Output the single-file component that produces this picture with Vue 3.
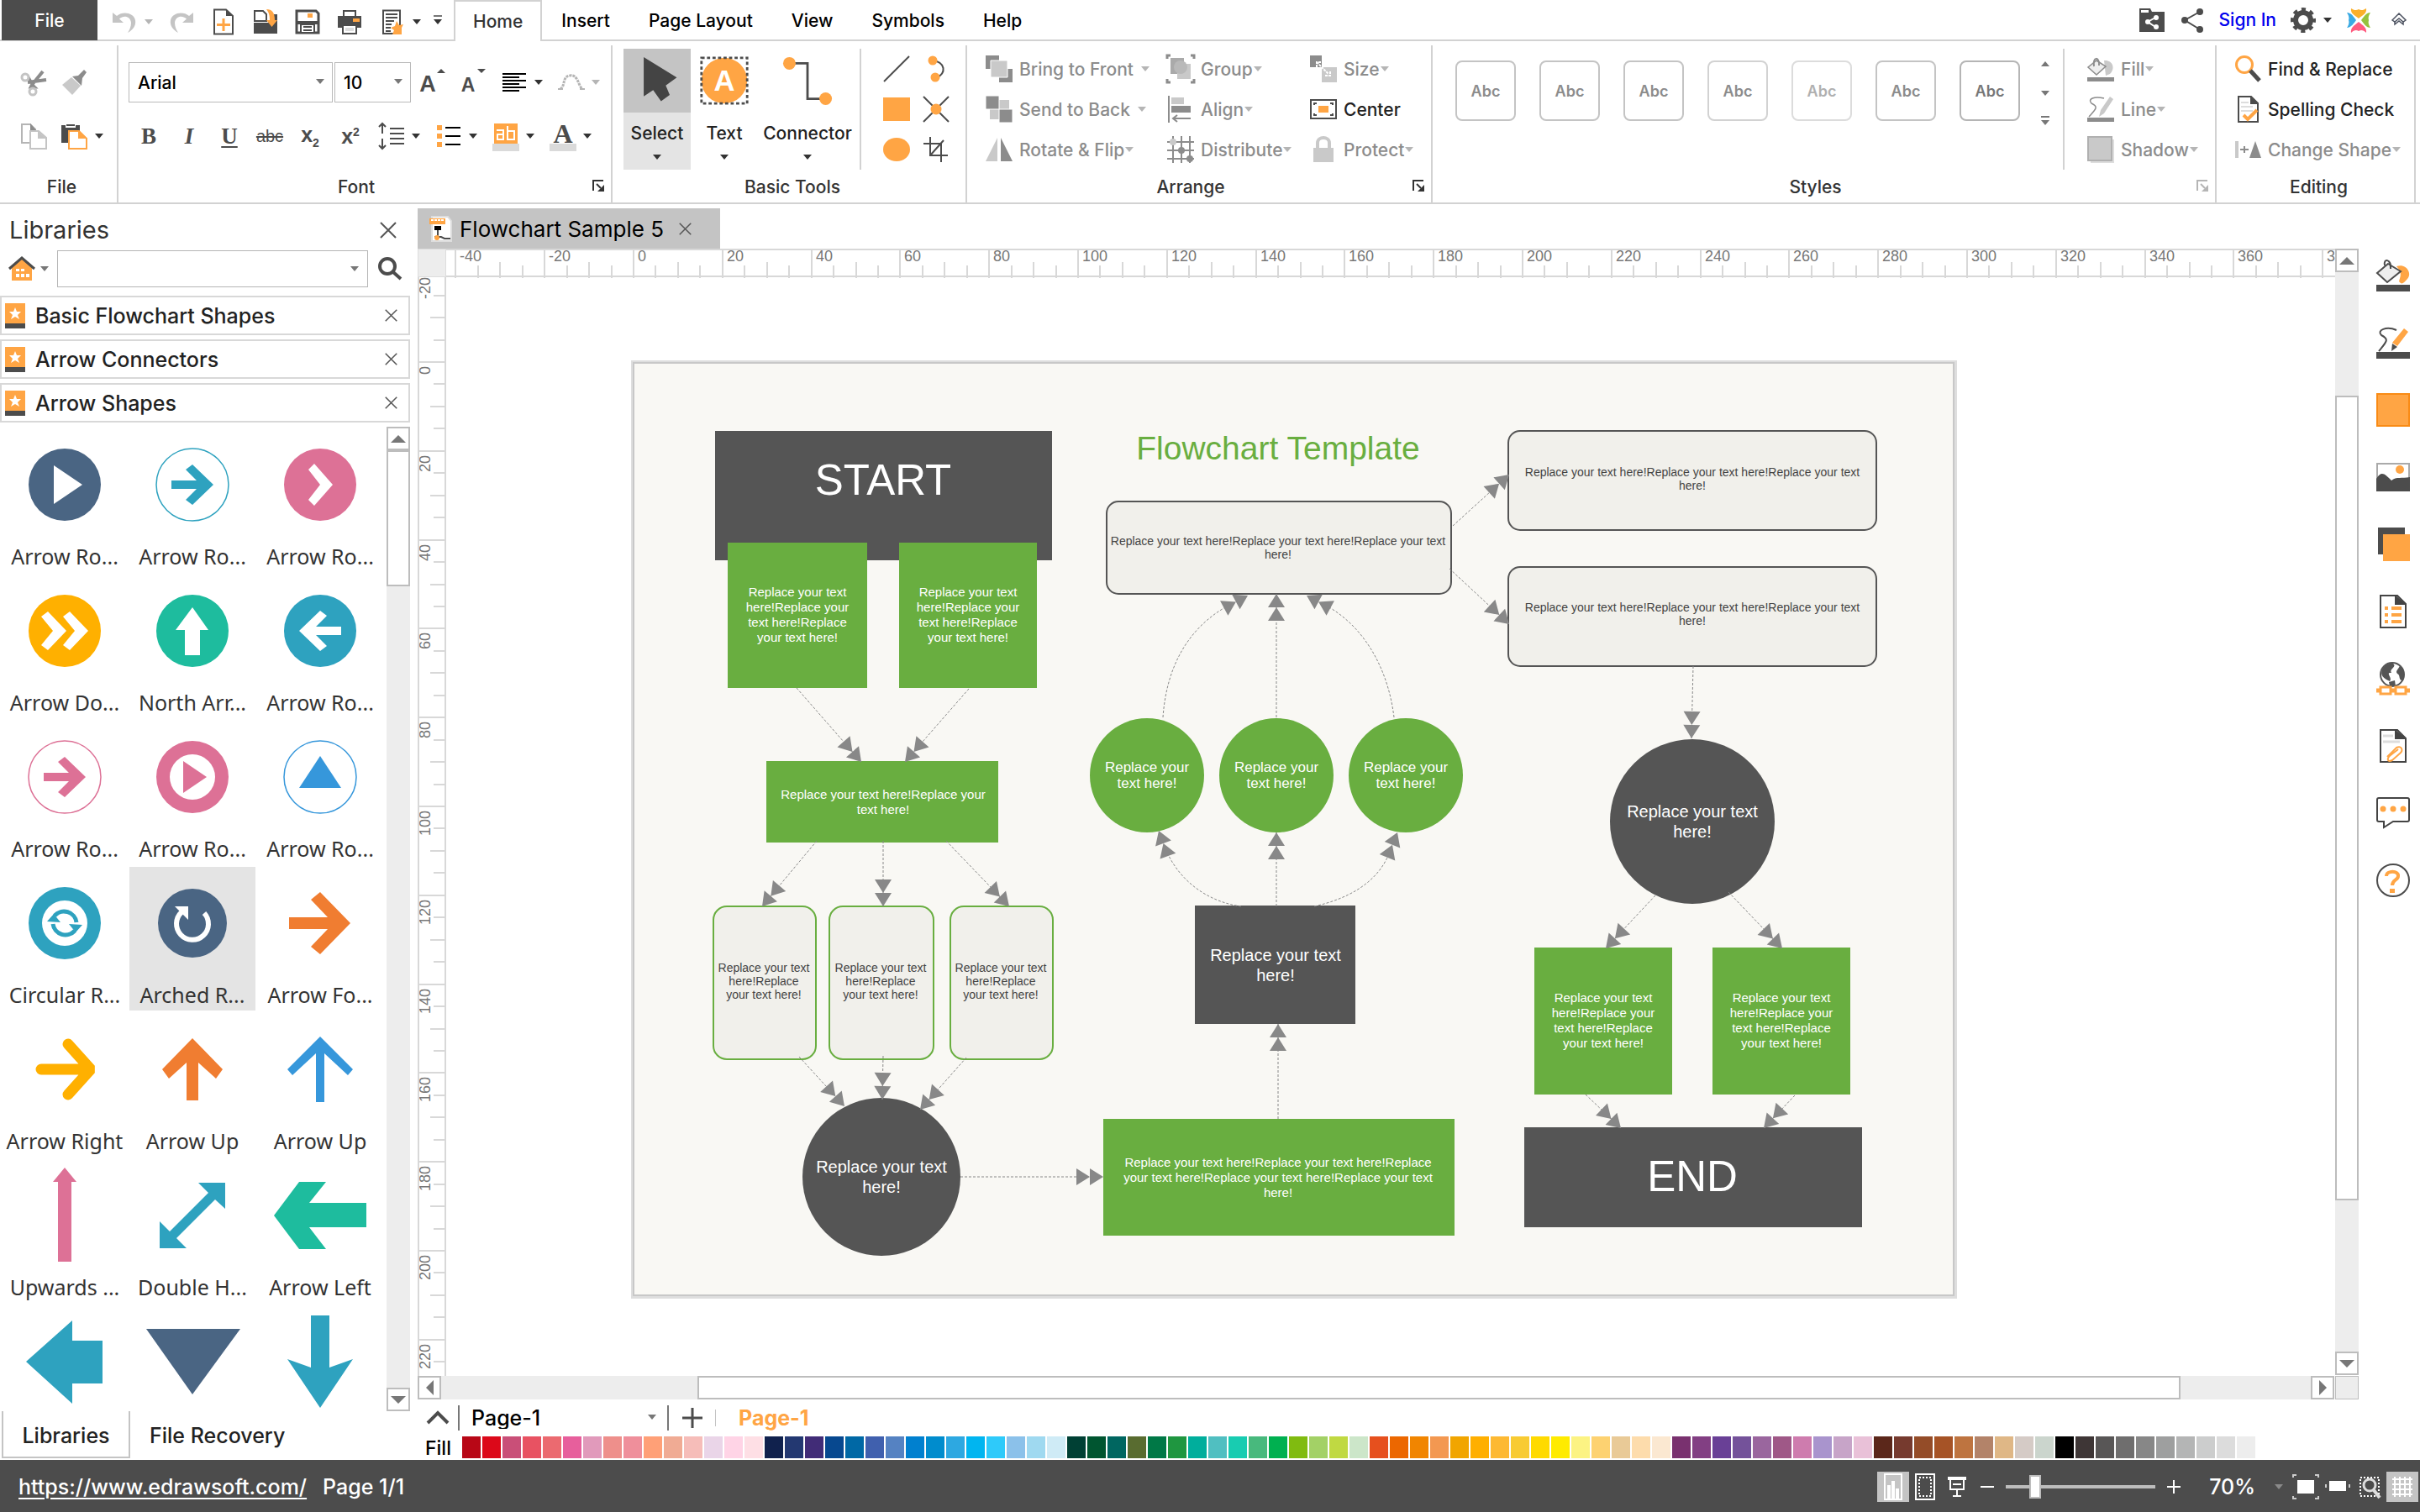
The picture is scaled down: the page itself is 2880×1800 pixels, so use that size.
<template>
  <div class="app">
    <!-- 顶部：快捷工具栏与菜单 -->
    <header class="topbar">
      <button class="file-btn">File</button>
      <div class="quick">
        <button class="q-undo" aria-label="Undo"><svg viewBox="0 0 32 32" v-html="icons.undo"></svg></button>
        <button class="q-arrow" aria-label="Undo history"><i class="tri light"></i></button>
        <button v-for="q in quick" :key="q" class="q-btn" :aria-label="q"><svg viewBox="0 0 32 32" v-html="icons[q]"></svg></button>
        <button class="q-small" aria-label="Template list"><i class="tri"></i></button>
        <button class="q-more" aria-label="Customize"><i class="tri bar"></i></button>
      </div>
      <nav class="tabs">
        <button v-for="t in tabs" :key="t" class="tab" :class="{ active: t === activeTab }" @click="activeTab = t">{{ t }}</button>
      </nav>
      <div class="account">
        <button aria-label="Share folder"><svg viewBox="0 0 32 32" v-html="icons.shareFolder"></svg></button>
        <button aria-label="Share"><svg viewBox="0 0 32 32" v-html="icons.share"></svg></button>
        <a href="#">Sign In</a>
        <button class="gear" aria-label="Options"><svg viewBox="0 0 32 32" v-html="icons.gear"></svg><i class="tri"></i></button>
        <button aria-label="Edraw"><svg viewBox="0 0 32 32" v-html="icons.logo"></svg></button>
        <button aria-label="Collapse ribbon"><svg viewBox="0 0 32 32" v-html="icons.collapse"></svg></button>
      </div>
    </header>

    <!-- 功能区 -->
    <section class="ribbon">
      <div class="group g-file">
        <div class="two-rows">
          <div class="row">
            <button aria-label="Cut"><svg viewBox="0 0 32 32" v-html="icons.cut"></svg></button>
            <button aria-label="Format painter"><svg viewBox="0 0 32 32" v-html="icons.brush"></svg></button>
          </div>
          <div class="row">
            <button aria-label="Copy"><svg viewBox="0 0 32 32" v-html="icons.copy"></svg></button>
            <button aria-label="Paste"><svg viewBox="0 0 32 32" v-html="icons.paste"></svg><i class="tri"></i></button>
          </div>
        </div>
        <div class="caption"><span>File</span></div>
      </div>

      <div class="group g-font">
        <div class="two-rows">
          <div class="row">
            <label class="combo family"><select aria-label="Font family"><option>Arial</option></select></label>
            <label class="combo size"><select aria-label="Font size"><option>10</option></select></label>
            <button class="fb" aria-label="Grow font"><svg viewBox="0 0 32 32" v-html="icons.grow"></svg></button>
            <button class="fb" aria-label="Shrink font"><svg viewBox="0 0 32 32" v-html="icons.shrink"></svg></button>
            <button class="fd" aria-label="Align text"><svg viewBox="0 0 32 32" v-html="icons.alignText"></svg><i class="tri"></i></button>
            <button class="fd" aria-label="Curve text"><svg viewBox="0 0 32 32" v-html="icons.curve"></svg><i class="tri light"></i></button>
          </div>
          <div class="row">
            <button class="fb serif" aria-label="Bold"><b>B</b></button>
            <button class="fb serif" aria-label="Italic"><em>I</em></button>
            <button class="fb serif" aria-label="Underline"><u>U</u></button>
            <button class="fb strike" aria-label="Strikethrough"><s>abc</s></button>
            <button class="fb script" aria-label="Subscript"><b>x<sub>2</sub></b></button>
            <button class="fb script" aria-label="Superscript"><b>x<sup>2</sup></b></button>
            <button v-for="f in fontDrops" :key="f" class="fd" :aria-label="f"><svg viewBox="0 0 32 32" v-html="icons[f]"></svg><i class="tri"></i></button>
          </div>
        </div>
        <div class="caption"><span>Font</span><button class="launch" aria-label="Font options"><svg viewBox="0 0 16 16" v-html="icons.launch"></svg></button></div>
      </div>

      <div class="group g-basic">
        <div class="row body">
          <button class="big on">
            <span class="big-icon"><svg viewBox="0 0 64 64" v-html="icons.select"></svg></span>
            <span>Select</span><i class="tri"></i>
          </button>
          <button class="big">
            <span class="big-icon"><svg viewBox="0 0 64 64" v-html="icons.text"></svg></span>
            <span>Text</span><i class="tri"></i>
          </button>
          <button class="big wide">
            <span class="big-icon"><svg viewBox="0 0 64 64" v-html="icons.connector"></svg></span>
            <span>Connector</span><i class="tri"></i>
          </button>
          <div class="draw">
            <button v-for="d in drawTools" :key="d" :aria-label="d"><svg viewBox="0 0 32 32" v-html="icons[d]"></svg></button>
          </div>
        </div>
        <div class="caption"><span>Basic Tools</span></div>
      </div>

      <div class="group g-arrange">
        <div class="body arrange">
          <button v-for="c in arrange" :key="c.name" class="cmd" :class="{ off: !c.on }">
            <svg viewBox="0 0 32 32" v-html="icons[c.icon]"></svg><span>{{ c.name }}</span><i v-if="!c.on" class="tri light" :class="{ far: c.far }"></i>
          </button>
        </div>
        <div class="caption"><span>Arrange</span><button class="launch" aria-label="Arrange options"><svg viewBox="0 0 16 16" v-html="icons.launch"></svg></button></div>
      </div>

      <div class="group g-styles">
        <div class="row body">
          <div class="gallery">
            <button v-for="n in 7" :key="n" :class="'abc abc' + n">Abc</button>
          </div>
          <div class="spin">
            <button aria-label="Previous styles"><i class="tri up"></i></button>
            <button aria-label="Next styles"><i class="tri"></i></button>
            <button aria-label="All styles"><i class="tri bar"></i></button>
          </div>
          <div class="stack styles-cmds">
            <button class="cmd off"><svg viewBox="0 0 32 32" v-html="icons.fill"></svg><span>Fill</span><i class="tri light"></i></button>
            <button class="cmd off"><svg viewBox="0 0 32 32" v-html="icons.line"></svg><span>Line</span><i class="tri light"></i></button>
            <button class="cmd off"><svg viewBox="0 0 32 32" v-html="icons.shadow"></svg><span>Shadow</span><i class="tri light"></i></button>
          </div>
        </div>
        <div class="caption"><span>Styles</span><button class="launch faint" aria-label="Style options"><svg viewBox="0 0 16 16" v-html="icons.launch"></svg></button></div>
      </div>

      <div class="group g-edit">
        <div class="stack body">
          <button class="cmd"><svg viewBox="0 0 32 32" v-html="icons.find"></svg><span>Find &amp; Replace</span></button>
          <button class="cmd"><svg viewBox="0 0 32 32" v-html="icons.spell"></svg><span>Spelling Check</span></button>
          <button class="cmd off"><svg viewBox="0 0 32 32" v-html="icons.change"></svg><span>Change Shape</span><i class="tri light"></i></button>
        </div>
        <div class="caption"><span>Editing</span></div>
      </div>
    </section>

    <main class="main">
      <!-- 左侧图库 -->
      <aside class="side">
        <div class="side-title">
          <h2>Libraries</h2>
          <button aria-label="Close panel"><svg viewBox="0 0 20 20" v-html="icons.close"></svg></button>
        </div>
        <div class="side-search">
          <button class="home" aria-label="Library menu"><svg viewBox="0 0 32 32" v-html="icons.home"></svg><i class="tri mid"></i></button>
          <label class="search-box"><input type="text" aria-label="Search libraries" /><i class="tri mid"></i></label>
          <button class="search" aria-label="Search"><svg viewBox="0 0 32 32" v-html="icons.search"></svg></button>
        </div>
        <div class="lib-rows">
          <div v-for="l in libs" :key="l" class="lib-row">
            <svg viewBox="0 0 24 30" v-html="icons.lib"></svg>
            <span>{{ l }}</span>
            <button :aria-label="'Close ' + l"><svg viewBox="0 0 20 20" v-html="icons.close"></svg></button>
          </div>
        </div>
        <div class="shapes">
          <div class="shape-grid">
            <button v-for="(s, i) in shapes" :key="i" class="shape" :class="{ picked: i === picked }" @click="picked = i">
              <svg viewBox="-60 -60 120 120" v-html="s.art"></svg>
              <span v-if="s.name">{{ s.name }}</span>
            </button>
          </div>
          <div class="vbar side-bar">
            <button aria-label="Scroll up"><i class="tri up mid big-tri"></i></button>
            <div class="vtrack"><span class="thumb"></span></div>
            <button aria-label="Scroll down"><i class="tri mid big-tri"></i></button>
          </div>
        </div>
        <div class="side-tabs">
          <button class="on">Libraries</button>
          <button>File Recovery</button>
        </div>
      </aside>

      <!-- 绘图区 -->
      <section class="doc">
        <div class="doc-tabs">
          <div class="doc-tab">
            <svg viewBox="0 0 32 32" v-html="icons.doc"></svg>
            <span>Flowchart Sample 5</span>
            <button aria-label="Close document"><svg viewBox="0 0 20 20" v-html="icons.close"></svg></button>
          </div>
        </div>
        <div class="board">
          <div class="corner"></div>
          <svg class="ruler-x">
            <g v-for="t in ticksX" :key="t.v">
              <line :x1="t.pos" :x2="t.pos" :y1="t.start" y2="35" />
              <text v-if="t.label !== null" :x="t.pos + 5" y="15">{{ t.label }}</text>
            </g>
            <path d="M0 1H2400M0 33H2400" />
          </svg>
          <div class="vbar">
            <button aria-label="Scroll up"><i class="tri up mid big-tri"></i></button>
            <div class="vtrack"><span class="thumb"></span></div>
            <button aria-label="Scroll down"><i class="tri mid big-tri"></i></button>
          </div>
          <svg class="ruler-y">
            <g v-for="t in ticksY" :key="t.v">
              <line :y1="t.pos" :y2="t.pos" :x1="t.start" x2="34" />
              <text v-if="t.label !== null" :transform="`translate(15 ${t.pos + 5}) rotate(-90)`" text-anchor="end">{{ t.label }}</text>
            </g>
            <path d="M1 0V1400M33 0V1400" />
          </svg>
          <div class="canvas">
            <svg class="page" viewBox="750 428 1580 1120" width="1580" height="1120">
              <rect x="751" y="429" width="1578" height="1117" fill="#dedede" />
              <rect x="754" y="432" width="1571" height="1110" fill="#f9f8f4" stroke="#c8c8c8" stroke-width="2" />
              <g v-for="(n, i) in nodes" :key="'n' + i">
                <circle v-if="n.r" :cx="n.x" :cy="n.y" :r="n.r" :class="n.kind" />
                <rect v-else :x="n.x" :y="n.y" :width="n.w" :height="n.h" :rx="n.round || 0" :class="n.kind" />
              </g>
              <text class="heading" x="1521" y="533">Flowchart Template</text>
              <g v-for="(n, i) in nodes" :key="'t' + i" class="label" :class="[n.kind, n.type]">
                <text v-for="(s, k) in n.text" :key="k" :x="n.tx" :y="n.ty + k * n.lh">{{ s }}</text>
              </g>
              <g v-for="(c, i) in links" :key="'c' + i">
                <path class="link" :d="c.d" />
                <path class="head" d="M0 0L-16 -10V10ZM-16 0L-32 -10V10Z" :transform="`translate(${c.x} ${c.y}) rotate(${c.a})`" />
              </g>
            </svg>
          </div>
          <div class="hbar">
            <button aria-label="Scroll left"><i class="tri left"></i></button>
            <div class="htrack"><span class="thumb"></span></div>
            <button aria-label="Scroll right"><i class="tri right"></i></button>
          </div>
          <div class="corner end"></div>
        </div>
        <div class="pages">
          <button class="caret" aria-label="Show pages"><svg viewBox="0 0 32 32" v-html="icons.caret"></svg></button>
          <label class="page-pick"><select aria-label="Page"><option>Page-1</option></select></label>
          <button class="plus" aria-label="Add page"><svg viewBox="0 0 32 32" v-html="icons.plus"></svg></button>
          <button class="page-tab">Page-1</button>
        </div>
        <div class="fills">
          <span class="fills-label">Fill</span>
          <button v-for="(c, i) in palette" :key="i" class="swatch" :style="{ background: '#' + c }" :aria-label="'#' + c"></button>
        </div>
      </section>

      <!-- 右侧工具条 -->
      <aside class="rail">
        <button v-for="r in rail" :key="r" :aria-label="r"><svg viewBox="0 0 40 40" v-html="icons[r]"></svg></button>
      </aside>
    </main>

    <footer class="status">
      <a href="https://www.edrawsoft.com/">https://www.edrawsoft.com/</a>
      <span class="count">Page 1/1</span>
      <div class="zoom">
        <button class="view on" aria-label="Normal view"><svg viewBox="0 0 32 32" v-html="icons.vNormal"></svg></button>
        <button class="view" aria-label="Page view"><svg viewBox="0 0 32 32" v-html="icons.vPage"></svg></button>
        <button class="view" aria-label="Presentation"><svg viewBox="0 0 32 32" v-html="icons.vShow"></svg></button>
        <button class="step" aria-label="Zoom out"><svg viewBox="0 0 16 16"><path d="M0 7H16V9H0Z" fill="#fff" /></svg></button>
        <input type="range" min="0" max="100" v-model="zoom" aria-label="Zoom" />
        <button class="step" aria-label="Zoom in"><svg viewBox="0 0 16 16"><path d="M0 7H7V0H9V7H16V9H9V16H7V9H0Z" fill="#fff" /></svg></button>
        <span class="percent">70%</span>
        <i class="tri dim"></i>
        <button class="fit" aria-label="Fit page"><svg viewBox="0 0 32 32" v-html="icons.fitPage"></svg></button>
        <button class="fit" aria-label="Fit width"><svg viewBox="0 0 32 32" v-html="icons.fitWidth"></svg></button>
        <button class="fit" aria-label="Zoom area"><svg viewBox="0 0 32 32" v-html="icons.area"></svg></button>
        <button class="view on grid-view" aria-label="Grid"><svg viewBox="0 0 32 32" v-html="icons.grid"></svg></button>
      </div>
    </footer>
  </div>
</template>

<script setup>
import { ref } from "vue";

const activeTab = ref("Home");
const picked = ref(10);
const zoom = ref(17);

const tabs = ["Home", "Insert", "Page Layout", "View", "Symbols", "Help"];
const quick = ["redo", "newDoc", "open", "save", "print", "list"];
const fontDrops = ["spacing", "bullets", "highlight", "fontColor"];
const drawTools = ["lineTool", "arcTool", "rectTool", "crossTool", "ellipseTool", "cropTool"];
const rail = ["rFill", "rLine", "rRect", "rImage", "rLayer", "rNote", "rLink", "rAttach", "rComment", "rHelp"];
const libs = ["Basic Flowchart Shapes", "Arrow Connectors", "Arrow Shapes"];

const arrange = [
  { name: "Bring to Front", icon: "front", far: true },
  { name: "Group", icon: "group" },
  { name: "Size", icon: "size" },
  { name: "Send to Back", icon: "back", far: true },
  { name: "Align", icon: "align" },
  { name: "Center", icon: "center", on: true },
  { name: "Rotate & Flip", icon: "flip" },
  { name: "Distribute", icon: "distribute" },
  { name: "Protect", icon: "protect" },
];

// 图标
const icons = {
  undo: '<path d="M2 5V17H15L10 12.500C15 8 23 9 24 17C24 22 22 26 20 29C27 25 30 20 29 14C27 5 14 3 7 9Z" fill="#c4c4c4"/>',
  redo: '<path d="M30 5V17H17L22 12.500C17 8 9 9 8 17C8 22 10 26 12 29C5 25 2 20 3 14C5 5 18 3 25 9Z" fill="#c4c4c4"/>',
  newDoc: '<path d="M5 1.500H19L27 9V30.500H5Z" fill="#fff" stroke="#4c4c4c" stroke-width="2"/><path d="M19 1V9H27Z" fill="#4c4c4c"/><path d="M14.500 12H17.500V18H24V21H17.500V27H14.500V21H8V18H14.500Z" fill="#ffa544"/>',
  open: '<path d="M3 3H13L17 7V15H3Z" fill="#fff" stroke="#4c4c4c" stroke-width="2"/><path d="M2 17H30V30H2Z" fill="#4c4c4c"/><path d="M26 7H30V17H26Z" fill="#4c4c4c"/><path d="M17 1C24 1 27 5 27 14H30L23.500 22 17 14H21C21 8 20 5 17 1Z" fill="#ffa544"/>',
  save: '<path d="M3 3H26L29 6V29H3Z" fill="#fff" stroke="#4c4c4c" stroke-width="3"/><path d="M3 15H29V19H3Z" fill="#4c4c4c"/><path d="M16 6H22V11H16Z" fill="#ffa544"/><path d="M8 19H24V29H8Z" fill="#fff" stroke="#4c4c4c" stroke-width="2"/><path d="M11 22H21M11 26H21" stroke="#4c4c4c" stroke-width="2"/>',
  print: '<path d="M9 3H23V10H9Z" fill="#fff" stroke="#4c4c4c" stroke-width="2"/><path d="M2 9H30V23H2Z" fill="#4c4c4c"/><path d="M8 20H24V30H8Z" fill="#fff" stroke="#4c4c4c" stroke-width="2"/><path d="M11 23H21V27H11Z" fill="#ddd"/><path d="M20 12H28V16H20Z" fill="#ffa544"/>',
  list: '<path d="M6 2.500H26V30H6Z" fill="#fff" stroke="#4c4c4c" stroke-width="2"/><path d="M9 7H23M9 11H23M9 15H19M9 19H16M9 23H15M9 27H15" stroke="#4c4c4c" stroke-width="2"/><path d="M22 15L25 20 30 19 28 23V31H17L19 26 15 23 20 21Z" fill="#ffa544"/>',
  shareFolder: '<path d="M1 2H14L16 6H31V30H1Z" fill="#4c4c4c"/><path d="M3 4H12V7H3Z" fill="#fff"/><path d="M20 13L11 18 20 24" fill="none" stroke="#fff" stroke-width="2"/><circle cx="11" cy="18" r="3" fill="#fff"/><circle cx="21" cy="13" r="3" fill="#fff"/><circle cx="21" cy="24" r="3" fill="#fff"/>',
  share: '<path d="M25 6L7 16 25 27" fill="none" stroke="#4c4c4c" stroke-width="2"/><circle cx="7" cy="16" r="4" fill="#4c4c4c"/><circle cx="25" cy="6" r="4" fill="#4c4c4c"/><circle cx="25" cy="27" r="4" fill="#4c4c4c"/>',
  gear: '<circle cx="16" cy="16" r="9" fill="none" stroke="#4c4c4c" stroke-width="6"/><circle cx="16" cy="16" r="13" fill="none" stroke="#4c4c4c" stroke-width="4" stroke-dasharray="5.100 5.110" stroke-dashoffset="2.500"/>',
  logo: '<path d="M7 2C10 4 13 5 16 3 19 5 22 4 25 2 26 8 21 10 16 14 11 10 6 8 7 2Z" fill="#fbb02a"/><path d="M7 31C10 28 13 27 16 29 19 27 22 28 25 31 26 25 21 22 16 18 11 22 6 25 7 31Z" fill="#ff5b7f"/><path d="M2 7C7 7 10 12 13 16 10 20 7 25 2 25 4 22 5 19 4 16 5 13 4 10 2 7Z" fill="#3baae3"/><path d="M30 7C25 7 22 12 19 16 22 20 25 25 30 25 28 22 27 19 28 16 27 13 28 10 30 7Z" fill="#95c23d"/>',
  collapse: '<path d="M8 16L16 8 24 16 21 18 16 14 11 18ZM11 18V21L16 17 21 21V18" fill="none" stroke="#4c5260" stroke-width="1.500"/>',
  cut: '<path d="M27 3L14 19M31 13L9 16" stroke="#8c8c8c" stroke-width="4" fill="none"/><path d="M14 18L18 22H12ZM10 10L14 17" stroke="#8c8c8c" stroke-width="3"/><circle cx="6" cy="10" r="4" fill="none" stroke="#c4c4c4" stroke-width="3"/><circle cx="15" cy="27" r="4" fill="none" stroke="#c4c4c4" stroke-width="3"/>',
  brush: '<path d="M13 10L2 19 14 31 24 20Z" fill="#c9c9c9"/><path d="M14 9L21 8 28 1 31 4 26 11 25 20Z" fill="#8c8c8c"/>',
  copy: '<path d="M2 2H12L18 8V24H2Z" fill="#fff" stroke="#b5b5b5" stroke-width="2"/><path d="M12 1L20 10H12Z" fill="#8c8c8c"/><path d="M12 10H22L31 18V31H12Z" fill="#fff" stroke="#c4c4c4" stroke-width="2"/><path d="M21 10V19H31Z" fill="#c4c4c4"/>',
  paste: '<path d="M1 3H23V24H1Z" fill="#4c4c4c"/><path d="M6 1H18V6H6Z" fill="#fff"/><path d="M7 3H17" stroke="#4c4c4c" stroke-width="2"/><path d="M10 10H22L31 19V31H10Z" fill="#fff" stroke="#ffa544" stroke-width="2"/><path d="M21 9V19H32Z" fill="#ffa544"/>',
  grow: '<text x="10" y="27" text-anchor="middle" font-family="Liberation Sans" font-weight="bold" font-size="27" fill="#4c4c4c">A</text><path d="M21 5L26 0 31 5Z" fill="#4c4c4c"/>',
  shrink: '<text x="10" y="27" text-anchor="middle" font-family="Liberation Sans" font-weight="bold" font-size="23" fill="#4c4c4c">A</text><path d="M21 0L26 5 31 0Z" fill="#4c4c4c"/>',
  alignText: '<path d="M2 6H30M2 10H22M2 14H30M2 18H22M2 22H30M2 26H22" stroke="#000" stroke-width="2"/>',
  curve: '<path d="M3 24C9 20 5 9 14 8 24 6 24 20 29 24" fill="none" stroke="#b5b5b5" stroke-width="3" stroke-dasharray="3 1"/><path d="M0 24H6M26 24H32" stroke="#b5b5b5" stroke-width="2"/>',
  spacing: '<path d="M5 1V13M5 19V31M1 5L5 1 9 5M1 27L5 31 9 27" fill="none" stroke="#4c4c4c" stroke-width="2"/><path d="M14 7H31M14 13H31M14 19H31M14 25H31" stroke="#4c4c4c" stroke-width="2"/>',
  bullets: '<path d="M2 3H8V9H2ZM2 13H8V19H2ZM2 23H8V29H2Z" fill="#ffa544"/><path d="M12 6H30M12 16H30M12 26H30" stroke="#000" stroke-width="2"/>',
  highlight: '<path d="M2 1H30V25H2Z" fill="#ffa544"/><path d="M5 9H13V20H6V14H13M18 4V20H26V10H18" fill="none" stroke="#fff" stroke-width="2"/><path d="M0 25H32V34H0Z" fill="#dadada"/>',
  fontColor: '<text x="16" y="24" text-anchor="middle" font-family="Liberation Serif" font-weight="bold" font-size="32" fill="#4c4c4c">A</text><path d="M0 25H32V34H0Z" fill="#dadada"/>',
  launch: '<path d="M1 13V1H13" fill="none" stroke="currentColor" stroke-width="2"/><path d="M5 5L10 10" stroke="currentColor" stroke-width="2"/><path d="M14 6V14H6Z" fill="currentColor"/>',
  select: '<path d="M15 2V52L27 44 37 58 48 50 43 38 57 28Z" fill="#444"/>',
  text: '<circle cx="32" cy="32" r="29" fill="#ffa544"/><path d="M3 3H61V61H3Z" fill="none" stroke="#4c4c4c" stroke-width="3" stroke-dasharray="4 3"/><text x="32" y="45" text-anchor="middle" font-family="Liberation Sans" font-weight="bold" font-size="37" fill="#fff">A</text>',
  connector: '<path d="M10 10H32V55H54" fill="none" stroke="#4c4c4c" stroke-width="3"/><circle cx="9" cy="10" r="8" fill="#ffa544"/><circle cx="55" cy="55" r="8" fill="#ffa544"/>',
  lineTool: '<path d="M1 31L31 1" stroke="#4c4c4c" stroke-width="2"/>',
  arcTool: '<path d="M12 6C27 8 29 21 16 27" fill="none" stroke="#4c4c4c" stroke-width="2"/><circle cx="12" cy="6" r="5.500" fill="#ffa544"/><circle cx="15" cy="26" r="5.500" fill="#ffa544"/>',
  rectTool: '<path d="M0 2H32V30H0Z" fill="#ffa544"/>',
  crossTool: '<path d="M1 1L31 31M31 1L1 31" stroke="#4c4c4c" stroke-width="2"/><circle cx="16" cy="16" r="6.500" fill="#ffa544"/>',
  ellipseTool: '<ellipse cx="16" cy="16" rx="16" ry="14" fill="#ffa544"/>',
  cropTool: '<path d="M9 1V23H30M1 9H22V31M25 5L9 23" fill="none" stroke="#4c4c4c" stroke-width="2"/>',
  front: '<path d="M0 0H16V16H0ZM16 16H32V32H16Z" fill="#8c8c8c"/><path d="M6 6H26V26H6Z" fill="#c9c9c9" stroke="#fff" stroke-width="1"/>',
  back: '<path d="M5 5H28V28H5Z" fill="#c9c9c9"/><path d="M0 0H16V16H0ZM16 16H32V32H16Z" fill="#8c8c8c" stroke="#fff" stroke-width="1"/>',
  flip: '<path d="M14 2V30H0Z" fill="#c9c9c9"/><path d="M18 2V30H32Z" fill="#8c8c8c"/>',
  group: '<path d="M0 4V0H4M28 0H32V4M32 28V32H28M4 32H0V28" fill="none" stroke="#8c8c8c" stroke-width="3"/><path d="M4 3H20V22H4Z" fill="#aaa"/><path d="M12 10H28V28H12Z" fill="#c9c9c9"/><circle cx="16" cy="14" r="8" fill="#b9b9b9"/>',
  align: '<path d="M2 0V32" stroke="#8c8c8c" stroke-width="2"/><path d="M5 2H20V10H5Z" fill="#c9c9c9"/><path d="M5 12H28V20H5Z" fill="#8c8c8c"/><path d="M28 27H8M12 23L7 27 12 31" fill="none" stroke="#8c8c8c" stroke-width="2"/>',
  distribute: '<path d="M7 0V32M17 0V32M27 0V32M0 7H32M0 17H32M0 27H32" stroke="#8c8c8c" stroke-width="2"/><circle cx="7" cy="7" r="4" fill="#c9c9c9"/><circle cx="17" cy="17" r="4" fill="#8c8c8c"/><circle cx="27" cy="27" r="4" fill="#8c8c8c"/>',
  size: '<path d="M0 0H14V14H0Z" fill="#8c8c8c"/><path d="M14 14H32V32H14Z" fill="#c9c9c9"/><path d="M8 14V8H14M8 8L22 22M18 24H24V18" fill="none" stroke="#fff" stroke-width="2" stroke-dasharray="3 1"/>',
  center: '<path d="M1 5H31V27H1Z" fill="#fff" stroke="#4c4c4c" stroke-width="2"/><path d="M10 12H22V20H10Z" fill="#ffa544"/><path d="M5 11V9H8M24 9H27V11M27 21V23H24M8 23H5V21" fill="none" stroke="#4c4c4c" stroke-width="2"/>',
  protect: '<path d="M9 15V8C9 0 23 0 23 8V15" fill="none" stroke="#c9c9c9" stroke-width="4"/><path d="M4 14H28V31H4Z" fill="#c9c9c9"/>',
  fill: '<path d="M20 6C30 5 34 15 27 22L22 24Z" fill="#c9c9c9"/><path d="M11 6L22 13 11 23 1 14Z" fill="#eee" stroke="#8c8c8c" stroke-width="1.500"/><path d="M8 13C6 1 15 1 14 12" fill="none" stroke="#8c8c8c" stroke-width="2"/><path d="M0 26H32V31H0Z" fill="#8c8c8c"/>',
  line: '<path d="M20 3C8 0 0 4 5 9 14 13 10 16 2 25" fill="none" stroke="#8c8c8c" stroke-width="1.500"/><path d="M27 1L31 4 20 21 14 25 16 17Z" fill="#c9c9c9"/><path d="M0 26H32V31H0Z" fill="#8c8c8c"/>',
  shadow: '<path d="M4 4H32V32H4Z" fill="#ddd"/><path d="M1 1H29V29H1Z" fill="#c9c9c9" stroke="#b0b0b0" stroke-width="2"/>',
  find: '<circle cx="12" cy="11" r="9.500" fill="#fff" stroke="#ffa544" stroke-width="3"/><path d="M19 18L30 30" stroke="#4c4c4c" stroke-width="5"/>',
  spell: '<path d="M5 1H20L28 9V31H5Z" fill="#fff" stroke="#4c4c4c" stroke-width="2"/><path d="M19 0V10H29Z" fill="#4c4c4c"/><path d="M8 8H17M8 13H22M8 18H22" stroke="#ddd" stroke-width="2"/><path d="M11 23L16 28 27 17" fill="none" stroke="#ffa544" stroke-width="4"/>',
  change: '<path d="M1 6V26H5V6Z" fill="#c9c9c9"/><path d="M7 16H17M12 12V20" stroke="#8c8c8c" stroke-width="2"/><path d="M25 6L32 26H18Z" fill="#8c8c8c"/>',
  close: '<path d="M1 1L19 19M19 1L1 19" stroke="#555" stroke-width="2" fill="none"/>',
  home: '<path d="M4 14L16 4 28 14V30H4Z" fill="#ffa544"/><path d="M1 16L16 3 31 16" fill="none" stroke="#4c4c4c" stroke-width="3"/><path d="M9 16H13V19H9ZM15 16H19V19H15ZM9 22H13V26H9ZM15 22H19V26H15ZM21 22H25V26H21Z" fill="#fff"/>',
  search: '<circle cx="14" cy="13" r="9" fill="none" stroke="#4c4c4c" stroke-width="4"/><path d="M21 20L30 28" stroke="#4c4c4c" stroke-width="4"/>',
  lib: '<path d="M0 0H24V24H0Z" fill="#ffa544"/><path d="M0 24H24V30H0Z" fill="#4c4c4c"/><path d="M12 5L14 10H19L15 14 17 19 12 16 7 19 9 14 5 10H10Z" fill="#fff"/>',
  doc: '<path d="M7 2H26L30 7V31H7Z" fill="#fff" stroke="#ddd" stroke-width="2"/><path d="M4 4H23V11H4Z" fill="#ffa544"/><path d="M6 6H21" stroke="#fff" stroke-width="2" stroke-dasharray="3 1"/><path d="M10 13H18V18H10Z" fill="#000"/><path d="M14 18V26M10 26H18L22 28H29" fill="none" stroke="#4c4c4c" stroke-width="2"/><circle cx="13" cy="27" r="3" fill="#ffa544"/>',
  caret: '<path d="M4 22L16 10 28 22" fill="none" stroke="#4c4c4c" stroke-width="4"/>',
  plus: '<path d="M16 4V28M4 16H28" stroke="#4c4c4c" stroke-width="3"/>',
  rFill: '<path d="M24 9C36 5 43 18 37 24 32 30 30 31 27 27 29 20 31 17 24 9Z" fill="#ffa544"/><path d="M14 6L29 15 13 28 1 17Z" fill="#eee" stroke="#4c4c4c" stroke-width="2"/><path d="M10 8C8 -1 18 0 17 12" fill="none" stroke="#4c4c4c" stroke-width="2"/><path d="M0 31H40V39H0Z" fill="#4c4c4c"/>',
  rLine: '<path d="M24 5C12 0 0 5 6 11 16 16 12 19 3 30" fill="none" stroke="#4c4c4c" stroke-width="2"/><path d="M33 3L38 7 25 24 19 20Z" fill="#ffa544"/><path d="M19 21L25 25 18 30Z" fill="#4c4c4c"/><path d="M0 31H40V39H0Z" fill="#4c4c4c"/>',
  rRect: '<path d="M1 1H39V39H1Z" fill="#ffa544" stroke="#f98b15" stroke-width="2"/>',
  rImage: '<path d="M1 4H39V36H1Z" fill="#fff" stroke="#aaa" stroke-width="2"/><path d="M0 22C6 12 10 16 18 24 24 19 30 22 40 20V37H0Z" fill="#4c4c4c"/><circle cx="28" cy="11" r="5" fill="#ffa544"/>',
  rLayer: '<path d="M2 0H34V32H2Z" fill="#4c4c4c"/><path d="M8 8H40V40H8Z" fill="#ffa544"/>',
  rNote: '<path d="M5 1H25L35 11V39H5Z" fill="#fff" stroke="#444" stroke-width="2"/><path d="M22 0V12H36Z" fill="#444"/><path d="M10 16H14M18 16H30M10 24H14M18 24H30M10 32H14M18 32H30" stroke="#ffa544" stroke-width="4"/>',
  rLink: '<circle cx="19" cy="15" r="14" fill="#fff" stroke="#555" stroke-width="2"/><path d="M7 9C10 3 16 1 20 2 25 6 15 8 18 13 10 12 20 19 16 23 9 20 4 16 7 9ZM28 4C33 9 34 15 31 22 26 22 29 15 25 14 22 10 27 9 28 4ZM15 24L22 22 23 29H16Z" fill="#555"/><path d="M5 30H17V38H5ZM23 30H35V38H23Z" fill="#fff" stroke="#ffa544" stroke-width="3"/><path d="M0 34H6M16 34H24M34 34H40" stroke="#ffa544" stroke-width="5"/>',
  rAttach: '<path d="M5 1H25L35 11V39H5Z" fill="#fff" stroke="#444" stroke-width="2"/><path d="M22 0V12H36Z" fill="#444"/><path d="M8 8H20M8 15H28" stroke="#ddd" stroke-width="3"/><path d="M13 33L24 22C31 19 32 26 28 29L19 37C13 40 12 35 17 31L26 24" fill="none" stroke="#ffa544" stroke-width="2"/>',
  rComment: '<path d="M3 2H37Q39 2 39 4V28Q39 30 37 30H20L9 37V30H3Q1 30 1 28V4Q1 2 3 2Z" fill="#fff" stroke="#444" stroke-width="2"/><circle cx="8" cy="15" r="3.500" fill="#ffa544"/><circle cx="20" cy="15" r="3.500" fill="#ffa544"/><circle cx="32" cy="15" r="3.500" fill="#ffa544"/>',
  rHelp: '<circle cx="20" cy="20" r="19" fill="#fff" stroke="#4c4c4c" stroke-width="2"/><path d="M12 15C12 8 27 8 26 15 26 20 19 19 19 26" fill="none" stroke="#ffa544" stroke-width="4"/><path d="M16 30H22V35H16Z" fill="#ffa544"/>',
  vNormal: '<path d="M6 1H26V31H6Z" fill="none" stroke="#fff" stroke-width="2"/><path d="M11 30V14M16 30V9M21 30V18" stroke="#fff" stroke-width="4"/>',
  vPage: '<path d="M5 1H27V31H5Z" fill="none" stroke="#fff" stroke-width="2"/><path d="M9 5H23V27H9Z" fill="none" stroke="#fff" stroke-width="2" stroke-dasharray="2 2"/>',
  vShow: '<path d="M5 4H27V8H5Z" fill="#fff"/><path d="M8 8V19H24V8M11 13H21M16 19V27M11 27H21" fill="none" stroke="#fff" stroke-width="2"/>',
  fitPage: '<path d="M6 8H26V24H6Z" fill="#fff"/><path d="M1 5V2H5M27 2H31V5M31 27V30H27M5 30H1V27" fill="none" stroke="#ccc" stroke-width="2"/>',
  fitWidth: '<path d="M6 9H26V21H6Z" fill="#fff"/><path d="M2 13V17M30 13V17" stroke="#ccc" stroke-width="2"/>',
  area: '<path d="M5 5H27V27H5Z" fill="none" stroke="#fff" stroke-width="2" stroke-dasharray="2 2"/><circle cx="16" cy="14" r="7" fill="none" stroke="#ddd" stroke-width="3"/><path d="M21 20L28 29" stroke="#ddd" stroke-width="4"/>',
  grid: '<path d="M7 4V28M13 4V28M19 4V28M25 4V28M4 7H28M4 13H28M4 19H28M4 25H28" stroke="#fff" stroke-width="2"/>',
};

const navy = "#4a6583";
const teal = "#2ea2bf";
const pink = "#dd7196";
const amber = "#ffb000";
const mint = "#1ebc9e";
const blue = "#3697db";
const orange = "#f07d31";

const disc = (c) => `<circle r="43" fill="${c}"/>`;
const ring = (c) => `<circle r="43" fill="#fff" stroke="${c}" stroke-width="1.500"/>`;
const shape = (c, d) => `<path d="${d}" fill="${c}"/>`;
const arrowRight = "M-25 -5H5L-8 -18 0 -24 25 0 0 24 -8 18 5 5H-25Z";
const arrowLeft = "M25 -5H-5L8 -18 0 -24 -25 0 0 24 8 18 -5 5H25Z";

const shapes = [
  { name: "Arrow Ro...", art: disc(navy) + shape("#fff", "M-13 -23L21 0 -13 23Z") },
  { name: "Arrow Ro...", art: ring(teal) + shape(teal, arrowRight) },
  { name: "Arrow Ro...", art: disc(pink) + shape("#fff", "M-14 -18L-7 -25 15 0 -7 25 -14 18 0 0Z") },
  { name: "Arrow Do...", art: disc(amber) + shape("#fff", "M-28 -17L-20 -23 2 0 -20 23 -28 17 -14 0ZM-2 -17L6 -23 28 0 6 23 -2 17 12 0Z") },
  { name: "North Arr...", art: disc(mint) + shape("#fff", "M0 -28L19 -1H9V29H-9V-1H-20Z") },
  { name: "Arrow Ro...", art: disc(teal) + shape("#fff", arrowLeft) },
  { name: "Arrow Ro...", art: ring(pink) + shape(pink, arrowRight) },
  { name: "Arrow Ro...", art: disc(pink) + '<circle r="27" fill="#fff"/>' + shape(pink, "M-11 -19L17 0 -11 19Z") },
  { name: "Arrow Ro...", art: ring(blue) + shape(blue, "M0 -25L25 13H-25Z") },
  {
    name: "Circular R...",
    art: disc(teal) + '<circle r="27" fill="#fff"/><path d="M-12 -9A15 15 0 0 1 14 -1M12 9A15 15 0 0 1 -14 1" fill="none" stroke="#2ea2bf" stroke-width="5"/>' + shape(teal, "M5 1L21 2 13 11ZM-5 -1L-21 -2 -13 -11Z"),
  },
  {
    name: "Arched R...",
    art: '<circle r="41" fill="#4a6583"/><path d="M-13 -13A19 19 0 1 0 14 -12" fill="none" stroke="#fff" stroke-width="6"/>' + shape("#fff", "M-21 -20H-5V-4Z"),
  },
  { name: "Arrow Fo...", art: shape(orange, "M-37 -7H9L-11 -28 0 -37 36 0 0 37 -11 28 9 7H-37Z") },
  { name: "Arrow Right", art: '<path d="M-28 0H28M4 -30L31 0 4 30" fill="none" stroke="#ffb000" stroke-width="13" stroke-linecap="round" stroke-linejoin="bevel"/>' },
  { name: "Arrow Up", art: shape(orange, "M0 -37L36 0 28 11 7 -8V37H-7V-8L-28 11 -36 0Z") },
  { name: "Arrow Up", art: shape(blue, "M0 -39L39 0 33 7 5 -19V39H-5V-19L-33 7 -39 0Z") },
  { name: "Upwards ...", art: shape(pink, "M0 -57L14 -40H8V55H-8V-40H-14Z") },
  { name: "Double H...", art: shape(teal, "M39 -39V-8L27 -19 -19 27 -7 39H-39V7L-27 19 19 -27 7 -39Z") },
  { name: "Arrow Left", art: shape(mint, "M-55 0L-25 -40H7L-13 -15H55V14H-13L7 40H-25Z") },
  // 最后一行只露出图形
  { art: shape(teal, "M-46 0L9 -49V-25H45V26H9V50Z") },
  { art: shape(navy, "M-55 -39H57L0 39Z") },
  { art: shape(teal, "M-11 -55H11V7L39 -3 0 55 -39 -3 -11 7Z") },
];

const palette = (
  "b80716 dc0819 c94f78 e85262 eb6a70 e75f9c e19abb ee8f8b ef8f9b ffa077 f0ab94 f6bdb9 ead5e8 ffd4e6 fedfe5 " +
  "10214d 233871 412c77 07488f 0068a5 4060ae 5582c2 0080cf 008ccd 2da8e1 00b5f0 2ecafa 8bc1ea 9fd9f0 cfebf6 " +
  "004034 005530 006660 596c30 007846 1f9640 00ae9c 50bfc1 18ccb1 48b97d 00b050 80bb10 a3d166 c0d942 cce6c9 " +
  "e6501e ec6700 f18500 f39851 f1a500 ffaf00 fdb933 f8cb33 ffda00 ffeb00 fcf383 fdd271 e9ca97 fddcac fbe8d1 " +
  "79316f 823f83 694096 74529a 9a669e 9f5887 ce7cae a994cd c7a4c8 e9c1d8 " +
  "5b271a 763a2e 944c28 a65326 be7440 b38369 dfb786 d5cbc6 cbd5cd " +
  "000000 3e3636 585656 6f6e6e 878787 9e9f9f b4b5b5 cccdcd dcdcdc ededed"
).split(" ");

// 标尺刻度：每 5 个单位一格，每 20 个单位标数字
const ticks = (from, to, origin, starts) => {
  const out = [];
  for (let v = from; v <= to; v += 5) {
    const kind = v % 20 === 0 ? 0 : v % 10 === 0 ? 1 : 2;
    out.push({ v, pos: Math.round(origin + v * 5.29), start: starts[kind], label: kind === 0 ? v : null });
  }
  return out;
};
const ticksX = ticks(-40, 385, 223, [0, 16, 20]);
const ticksY = ticks(-20, 225, 101, [0, 15, 19]);

// 流程图节点
const four = ["Replace your text", "here!Replace your", "text here!Replace", "your text here!"];
const long = ["Replace your text here!Replace your text here!Replace your text", "here!"];
const slim = ["Replace your text", "here!Replace", "your text here!"];
const pair = ["Replace your text", "here!"];
const short = ["Replace your", "text here!"];

const nodes = [
  { kind: "dark", type: "huge", x: 851, y: 513, w: 401, h: 154, text: ["START"], tx: 1051, ty: 571, lh: 0 },
  { kind: "green", type: "s15", x: 866, y: 646, w: 166, h: 173, text: four, tx: 949, ty: 704, lh: 18 },
  { kind: "green", type: "s15", x: 1070, y: 646, w: 164, h: 173, text: four, tx: 1152, ty: 704, lh: 18 },
  { kind: "green", type: "s15", x: 912, y: 906, w: 276, h: 97, text: ["Replace your text here!Replace your", "text here!"], tx: 1051, ty: 945, lh: 18 },
  { kind: "pale lime", type: "s14", x: 849, y: 1079, w: 122, h: 182, round: 16, text: slim, tx: 909, ty: 1152, lh: 16 },
  { kind: "pale lime", type: "s14", x: 987, y: 1079, w: 124, h: 182, round: 16, text: slim, tx: 1048, ty: 1152, lh: 16 },
  { kind: "pale lime", type: "s14", x: 1131, y: 1079, w: 122, h: 182, round: 16, text: slim, tx: 1191, ty: 1152, lh: 16 },
  { kind: "dark", type: "s20", x: 1049, y: 1401, r: 94, text: pair, tx: 1049, ty: 1389, lh: 24 },
  {
    kind: "green", type: "s15", x: 1313, y: 1332, w: 418, h: 139,
    text: ["Replace your text here!Replace your text here!Replace", "your text here!Replace your text here!Replace your text", "here!"],
    tx: 1521, ty: 1383, lh: 18,
  },
  { kind: "dark", type: "s20", x: 1422, y: 1078, w: 191, h: 141, text: pair, tx: 1518, ty: 1137, lh: 24 },
  { kind: "green", type: "s17", x: 1365, y: 923, r: 68, text: short, tx: 1365, ty: 913, lh: 19 },
  { kind: "green", type: "s17", x: 1519, y: 923, r: 68, text: short, tx: 1519, ty: 913, lh: 19 },
  { kind: "green", type: "s17", x: 1673, y: 923, r: 68, text: short, tx: 1673, ty: 913, lh: 19 },
  { kind: "pale grey", type: "s14", x: 1317, y: 597, w: 410, h: 110, round: 14, text: long, tx: 1521, ty: 644, lh: 16 },
  { kind: "pale grey", type: "s14", x: 1795, y: 513, w: 438, h: 118, round: 14, text: long, tx: 2014, ty: 562, lh: 16 },
  { kind: "pale grey", type: "s14", x: 1795, y: 675, w: 438, h: 118, round: 14, text: long, tx: 2014, ty: 723, lh: 16 },
  { kind: "dark", type: "s20", x: 2014, y: 978, r: 98, text: pair, tx: 2014, ty: 966, lh: 24 },
  { kind: "green", type: "s15", x: 1826, y: 1128, w: 164, h: 175, text: four, tx: 1908, ty: 1187, lh: 18 },
  { kind: "green", type: "s15", x: 2038, y: 1128, w: 164, h: 175, text: four, tx: 2120, ty: 1187, lh: 18 },
  { kind: "dark", type: "huge", x: 1814, y: 1342, w: 402, h: 119, text: ["END"], tx: 2014, ty: 1400, lh: 0 },
];

// 连接线：直线由起止点算出角度，曲线单独给出
const straight = [
  [948, 819, 1025, 907], [1153, 820, 1077, 907],
  [972, 1001, 907, 1079], [1051, 1001, 1051, 1079], [1126, 1001, 1201, 1079],
  [951, 1258, 1005, 1317], [1051, 1257, 1050, 1309], [1150, 1259, 1095, 1321],
  [1143, 1401, 1313, 1401], [1521, 1332, 1521, 1219],
  [1729, 626, 1796, 565], [1725, 677, 1796, 743], [2015, 793, 2013, 879],
  [1519, 854, 1519, 707], [1519, 1079, 1519, 991],
  [1970, 1066, 1911, 1129], [2057, 1062, 2121, 1129],
  [1887, 1303, 1929, 1343], [2136, 1304, 2099, 1343],
].map(([x1, y1, x, y]) => ({
  d: `M${x1} ${y1}L${x} ${y}`,
  x,
  y,
  a: Math.round((Math.atan2(y - y1, x - x1) * 180) / Math.PI),
}));

const links = [
  ...straight,
  { d: "M1384 854C1388 796 1412 750 1458 723", x: 1485, y: 709, a: -28 },
  { d: "M1659 854C1652 796 1624 748 1582 723", x: 1555, y: 709, a: -152 },
  { d: "M1477 1079C1440 1074 1408 1052 1391 1019", x: 1379, y: 989, a: -110 },
  { d: "M1564 1079C1604 1070 1636 1052 1651 1021", x: 1663, y: 991, a: -68 },
];
</script>

<style>
body {
  margin: 0;
  overflow: hidden;
}
</style>

<style scoped>
.app {
  display: flex;
  flex-direction: column;
  height: 100vh;
  background: #fff;
  color: #333;
  font: 500 21px Inter, "Noto Sans", sans-serif;
}
button {
  display: flex;
  align-items: center;
  justify-content: center;
  padding: 0;
  border: 0;
  background: none;
  color: inherit;
  font: inherit;
  white-space: nowrap;
}
button svg {
  display: block;
  flex: none;
  overflow: visible;
}
select,
input {
  font: inherit;
  color: #000;
}
.row {
  display: flex;
  align-items: center;
}

/* 小三角 */
.tri {
  flex: none;
  width: 0;
  height: 0;
  border: 5px solid transparent;
  border-top: 6px solid #333;
  border-bottom: 0;
}
.tri.light {
  border-top-color: #b5b5b5;
}
.tri.mid {
  border-top-color: #777;
}
.tri.dim {
  border-top-color: #8a8a8a;
}
.tri.up {
  border-top: 0;
  border-bottom: 6px solid #777;
}
.tri.big-tri {
  border-left-width: 9px;
  border-right-width: 9px;
}
.tri.up.big-tri,
.tri.big-tri {
  border-top-width: 9px;
}
.tri.up.big-tri {
  border-top-width: 0;
  border-bottom-width: 9px;
}
.tri.left {
  border: 9px solid transparent;
  border-right: 9px solid #777;
  border-left: 0;
}
.tri.right {
  border: 9px solid transparent;
  border-left: 9px solid #777;
  border-right: 0;
}
.tri.bar::before {
  content: "";
  display: block;
  width: 10px;
  height: 2px;
  margin: -11px 0 0 -5px;
  background: #777;
}

/* 顶部 */
.topbar {
  display: flex;
  flex: none;
  height: 49px;
  box-sizing: border-box;
  border-bottom: 2px solid #d2d2d2;
}
.file-btn {
  width: 114px;
  height: 48px;
  margin-left: 2px;
  background: #4c4c4c;
  color: #fff;
}
.quick {
  display: flex;
  align-items: center;
  padding-left: 12px;
  padding-top: 4px;
}
.quick svg {
  width: 32px;
  height: 32px;
}
.q-undo {
  width: 40px;
}
.q-arrow {
  width: 18px;
  margin-right: 5px;
}
.q-btn {
  width: 50px;
}
.q-small {
  width: 10px;
}
.q-more {
  width: 39px;
}
.tabs {
  display: flex;
  height: 49px;
}
.tab {
  padding: 0 23px;
  color: #000;
}
.tab.active {
  padding: 0 21px;
  border: 2px solid #d2d2d2;
  border-bottom: 0;
  background: #fff;
  color: #333;
}
.account {
  display: flex;
  align-items: center;
  gap: 16px;
  margin-left: auto;
  padding-right: 9px;
}
.account svg {
  width: 32px;
  height: 32px;
}
.account a {
  color: #0000ee;
  text-decoration: none;
}
.gear {
  gap: 8px;
}

/* 功能区 */
.ribbon {
  display: flex;
  flex: none;
  height: 194px;
  box-sizing: border-box;
  padding: 5px 5px 0 0;
  border-bottom: 2px solid #d2d2d2;
}
.group {
  display: flex;
  flex-direction: column;
  box-sizing: border-box;
  border-right: 2px solid #d2d2d2;
}
.g-file {
  width: 141px;
}
.g-font {
  width: 588px;
}
.g-basic {
  width: 422px;
}
.g-arrange {
  width: 554px;
}
.g-styles {
  flex: 1;
}
.g-edit {
  width: 237px;
}
.caption {
  display: flex;
  height: 38px;
  align-items: center;
}
.caption span {
  flex: 1;
  padding-left: 8px;
  text-align: center;
}
.launch {
  width: 28px;
}
.launch svg {
  width: 16px;
  height: 16px;
}
.faint {
  color: #b5b5b5;
}
.two-rows {
  display: flex;
  flex: 1;
  flex-direction: column;
  padding-top: 12px;
}
.two-rows .row {
  height: 64px;
}
.two-rows svg {
  width: 32px;
  height: 32px;
}
.g-file .row {
  gap: 16px;
  padding-left: 24px;
}
.g-file button {
  gap: 9px;
}
.g-font .row {
  padding-left: 12px;
}
.combo {
  position: relative;
  height: 48px;
  margin-right: 2px;
}
.combo select {
  width: 100%;
  height: 100%;
  padding: 0 10px;
  border: 1px solid #b9b9b9;
  border-radius: 0;
  background: #fff;
  appearance: none;
}
.combo::after,
.page-pick::after {
  content: "";
  position: absolute;
  top: 50%;
  right: 10px;
  margin-top: -4px;
  border: 5px solid transparent;
  border-top: 6px solid #777;
  border-bottom: 0;
}
.family {
  width: 243px;
}
.size {
  width: 91px;
}
.fb {
  width: 48px;
  color: #4c4c4c;
}
.fd {
  gap: 8px;
  width: 68px;
}
.serif {
  font: bold 27px "Liberation Serif", serif;
}
.serif u {
  text-underline-offset: 3px;
}
.strike {
  font: 20px "Liberation Sans", sans-serif;
}
.script {
  font: 25px "Liberation Sans", sans-serif;
}
.script sub,
.script sup {
  font-size: 14px;
}
.body {
  flex: 1;
}
.g-basic .body {
  align-items: flex-start;
  padding: 4px 0 0 13px;
}
.big {
  flex-direction: column;
  justify-content: flex-start;
  width: 80px;
  height: 144px;
  color: #222;
}
.big.wide {
  width: 118px;
}
.big-icon {
  display: flex;
  align-items: center;
  justify-content: center;
  width: 100%;
  height: 76px;
  margin-bottom: 12px;
}
.big.on {
  background: #e4e4e4;
}
.big.on .big-icon {
  background: #c4c4c4;
}
.big svg {
  width: 60px;
  height: 60px;
}
.big .tri {
  margin-top: 13px;
}
.draw {
  display: grid;
  grid-template-columns: 47px 47px;
  grid-auto-rows: 48px;
  margin-left: 3px;
  padding-left: 18px;
  border-left: 2px solid #d2d2d2;
}
.draw svg,
.cmd svg {
  width: 32px;
  height: 32px;
}
.arrange {
  display: grid;
  grid-template-columns: 216px 170px 1fr;
  grid-auto-rows: 48px;
  padding: 4px 0 0 22px;
}
.cmd {
  justify-content: flex-start;
  height: 48px;
  color: #222;
}
.cmd.off {
  color: #8c8c8c;
}
.cmd span {
  margin-left: 8px;
}
.cmd .tri {
  margin-left: 1px;
}
.cmd .tri.far {
  margin-left: 9px;
}
.g-styles .row {
  align-items: flex-start;
  padding-top: 4px;
}
.gallery {
  display: flex;
  gap: 28px;
  padding: 14px 0 0 27px;
}
.abc {
  width: 72px;
  height: 72px;
  border: 2px solid #c4c4c4;
  border-radius: 8px;
  color: #8c8c8c;
  font-size: 18px;
  font-weight: 600;
}
.abc4 {
  border-color: #d2d2d2;
}
.abc5 {
  border-color: #dcdcdc;
  color: #b0b0b0;
}
.abc7 {
  border-color: #b5b5b5;
  color: #777;
}
.spin {
  display: flex;
  flex-direction: column;
  width: 26px;
  margin: 0 8px 0 auto;
}
.spin button {
  height: 35px;
}
.spin .tri {
  border-top-color: #777;
}
.styles-cmds {
  width: 152px;
  padding-left: 27px;
  border-left: 2px solid #d2d2d2;
}
.g-edit .body {
  padding: 4px 0 0 21px;
}

/* 主体 */
.main {
  display: flex;
  flex: 1;
  min-height: 0;
}
.side {
  display: flex;
  flex-direction: column;
  width: 488px;
  margin-right: 9px;
}
.side-title {
  display: flex;
  align-items: center;
  justify-content: space-between;
  height: 55px;
  padding: 6px 16px 0 11px;
  box-sizing: border-box;
}
.side-title h2 {
  margin: 0;
  font-size: 29px;
  font-weight: 400;
}
.side-title button svg {
  width: 20px;
  height: 20px;
}
.side-search {
  display: flex;
  align-items: center;
  height: 44px;
}
.home {
  gap: 6px;
  width: 68px;
}
.home svg,
.search svg {
  width: 32px;
  height: 32px;
}
.search-box {
  display: flex;
  flex: 1;
  align-items: center;
  box-sizing: border-box;
  height: 44px;
  padding-right: 10px;
  border: 1px solid #b5b5b5;
}
.search-box input {
  flex: 1;
  min-width: 0;
  border: 0;
  outline: 0;
}
.search {
  width: 50px;
}
.lib-rows {
  display: flex;
  flex-direction: column;
  gap: 5px;
  padding-top: 10px;
}
.lib-row {
  display: flex;
  align-items: center;
  box-sizing: border-box;
  height: 47px;
  padding: 0 13px 0 4px;
  border: 2px solid #d8d8d8;
  color: #222;
  font-size: 25px;
}
.lib-row > svg {
  width: 24px;
  height: 30px;
  margin-right: 12px;
}
.lib-row span {
  flex: 1;
}
.lib-row button svg {
  width: 15px;
  height: 15px;
}
.shapes {
  display: flex;
  flex: 1;
  min-height: 0;
  padding-top: 5px;
}
.shape-grid {
  display: grid;
  flex: 1;
  grid-template-columns: repeat(3, 150px);
  grid-auto-rows: 171px;
  gap: 3px 2px;
  overflow: hidden;
  padding: 2px 0 0 2px;
}
.shape {
  flex-direction: column;
  justify-content: flex-start;
  padding-top: 7px;
}
.shape svg {
  width: 120px;
  height: 120px;
}
.shape span {
  min-width: 104px;
  color: #333;
  font: 25px/50px "Noto Sans", sans-serif;
}
.shape.picked {
  background: #e4e4e4;
}
.vbar {
  display: flex;
  flex-direction: column;
  width: 28px;
  background: #ededed;
}
.vbar button {
  box-sizing: border-box;
  height: 28px;
  border: 2px solid #bdbdbd;
  background: #fff;
}
.vtrack {
  display: grid;
  flex: 1;
  grid-template-rows: 147fr 958fr 180fr;
}
.side-bar .vtrack {
  grid-template-rows: 0fr 162fr 955fr;
}
.thumb {
  grid-row: 2;
  border: 2px solid #bdbdbd;
  background: #fff;
}
.side-tabs {
  display: flex;
  height: 58px;
  color: #222;
  font-size: 25px;
}
.side-tabs button {
  height: 56px;
  padding: 2px 23px 0;
}
.side-tabs .on {
  box-sizing: border-box;
  width: 153px;
  margin-left: 2px;
  padding: 4px 0 0;
  border: 2px solid #c4c4c4;
  border-top: 0;
}

/* 文档 */
.doc {
  display: flex;
  flex: 1;
  flex-direction: column;
  min-width: 0;
}
.doc-tabs {
  padding-top: 5px;
}
.doc-tab {
  display: inline-flex;
  align-items: center;
  box-sizing: border-box;
  height: 48px;
  padding: 0 34px 0 10px;
  background: #c4c4c4;
  color: #000;
  font-size: 26px;
  font-weight: 400;
  vertical-align: top;
}
.doc-tab > svg {
  width: 32px;
  height: 32px;
  margin-right: 8px;
}
.doc-tab button {
  margin-left: 18px;
}
.doc-tab button svg {
  width: 15px;
  height: 15px;
}
.board {
  display: grid;
  flex: 1;
  grid-template: 34px 1fr 28px / 34px 1fr 28px;
  min-height: 0;
}
.board > .vbar {
  grid-area: 1 / 3 / 3 / 4;
  margin-bottom: 1px;
}
.corner {
  background: #ededed;
  border: 1px solid #ddd;
}
.corner.end {
  grid-area: 3 / 3;
  border-color: #bdbdbd;
}
.ruler-x {
  grid-area: 1 / 2;
  width: 100%;
  height: 36px;
  overflow: hidden;
}
.ruler-y {
  grid-area: 2 / 1;
  width: 36px;
  height: 100%;
  overflow: hidden;
}
.ruler-x line,
.ruler-y line,
.ruler-x path,
.ruler-y path {
  stroke: #d8d8d8;
  stroke-width: 2;
}
.ruler-x text,
.ruler-y text {
  fill: #777;
  font: 18px "Liberation Sans", sans-serif;
}
.canvas {
  grid-area: 2 / 2;
  overflow: hidden;
  padding: 98px 0 0 219px;
}
.page {
  display: block;
}
.hbar {
  display: flex;
  grid-area: 3 / 1 / 4 / 3;
  margin-right: 1px;
  background: #ededed;
}
.hbar button {
  box-sizing: border-box;
  width: 28px;
  border: 2px solid #bdbdbd;
  background: #fff;
}
.htrack {
  display: grid;
  flex: 1;
  grid-template-columns: 305fr 1766fr 155fr;
}
.htrack .thumb {
  grid-row: 1;
  grid-column: 2;
}

/* 流程图 */
.dark {
  fill: #555;
}
.green {
  fill: #69ae40;
}
.pale {
  fill: #f1f0eb;
  stroke-width: 2;
}
.lime {
  stroke: #69ae40;
}
.grey {
  stroke: #555;
}
.page text {
  text-anchor: middle;
  dominant-baseline: central;
  font-family: "Liberation Sans", Arial, sans-serif;
  font-weight: 400;
}
.heading {
  fill: #69ae40;
  font-size: 39px;
}
.label {
  fill: #fff;
  stroke: none;
}
.label.pale {
  fill: #444;
}
.huge {
  font-size: 51px;
}
.s14 {
  font-size: 14px;
}
.s15 {
  font-size: 15px;
}
.s17 {
  font-size: 17px;
}
.s20 {
  font-size: 20px;
}
.link {
  fill: none;
  stroke: #888;
  stroke-width: 1;
  stroke-dasharray: 3 2;
}
.head {
  fill: #888;
}

/* 页签与色板 */
.pages {
  display: flex;
  align-items: center;
  height: 44px;
  color: #000;
  font-size: 25px;
}
.pages svg {
  width: 32px;
  height: 32px;
}
.caret {
  width: 48px;
}
.page-pick {
  position: relative;
  width: 247px;
  border: solid #777;
  border-width: 0 2px;
}
.page-pick select {
  width: 100%;
  height: 26px;
  padding: 0 14px;
  border: 0;
  background: none;
  line-height: 26px;
  appearance: none;
}
.page-pick::after {
  right: 13px;
}
.plus {
  width: 56px;
  height: 20px;
  border-right: 1px solid #c4c4c4;
}
.page-tab {
  margin-left: 27px;
  color: #ffa544;
  font-weight: 700;
}
.fills {
  display: flex;
  gap: 2px;
  height: 28px;
  color: #000;
  font-size: 23px;
}
.fills-label {
  width: 42px;
  padding-left: 9px;
  line-height: 28px;
}
.swatch {
  width: 22px;
  height: 26px;
}

.rail {
  display: flex;
  flex-direction: column;
  align-items: center;
  gap: 40px;
  width: 73px;
  padding: 65px 0 0 8px;
  box-sizing: border-box;
}
.rail svg {
  width: 40px;
  height: 40px;
}

/* 状态栏 */
.status {
  display: flex;
  flex: none;
  align-items: center;
  box-sizing: border-box;
  height: 62px;
  padding: 2px 2px 0 22px;
  background: #4c4c4c;
  color: #fff;
  font-size: 25px;
}
.status a {
  color: #fff;
  text-underline-offset: 4px;
}
.count {
  margin-left: 19px;
}
.zoom {
  display: flex;
  align-items: center;
  margin-left: auto;
}
.view {
  width: 38px;
  height: 36px;
}
.view.on {
  background: #c4c4c4;
}
.view svg,
.fit svg {
  width: 32px;
  height: 32px;
}
.step {
  margin: 0 9px;
}
.step svg {
  width: 16px;
  height: 16px;
}
.zoom input {
  width: 178px;
  height: 30px;
  margin: 0 5px;
  background: none;
  appearance: none;
}
.zoom input::-webkit-slider-runnable-track {
  height: 4px;
  background: #bdbdbd;
}
.zoom input::-webkit-slider-thumb {
  width: 14px;
  height: 28px;
  margin-top: -12px;
  border: 2px solid #bdbdbd;
  background: #fff;
  appearance: none;
}
.percent {
  margin: 0 23px 0 25px;
}
.fit {
  margin-left: 6px;
}
.dim {
  margin-right: 5px;
}
.grid-view {
  margin-left: 4px;
}
</style>
